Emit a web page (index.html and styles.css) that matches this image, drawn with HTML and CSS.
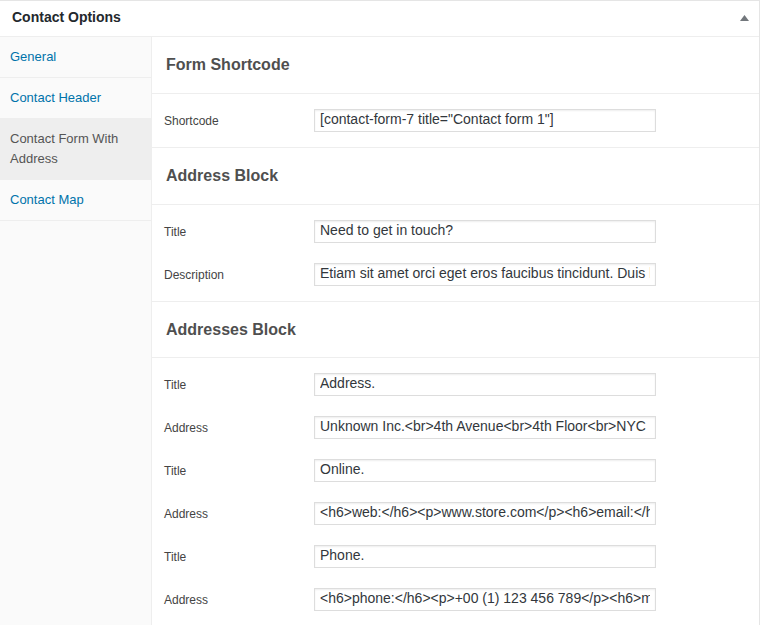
FILE: index.html
```html
<!DOCTYPE html>
<html>
<head>
<meta charset="utf-8">
<link rel="stylesheet" href="styles.css">
</head>
<body>
<div class="postbox">
  <div class="hndle">
    <span class="hndle-title">Contact Options</span>
    <svg class="toggle" width="9" height="6" viewBox="0 0 9 6"><polygon points="4.5,0 9,6 0,6" fill="#72777c"/></svg>
  </div>
  <div class="inside">
    <ul class="tabs">
      <li class="tab"><a>General</a></li>
      <li class="tab"><a>Contact Header</a></li>
      <li class="tab active"><a>Contact Form With Address</a></li>
      <li class="tab"><a>Contact Map</a></li>
    </ul>
    <div class="panel">
      <div class="section-title">Form Shortcode</div>
      <div class="fields">
        <div class="row"><label class="lbl">Shortcode</label><input class="inp" type="text" value='[contact-form-7 title="Contact form 1"]'></div>
      </div>
      <div class="section-title">Address Block</div>
      <div class="fields">
        <div class="row"><label class="lbl">Title</label><input class="inp" type="text" value="Need to get in touch?"></div>
        <div class="row"><label class="lbl">Description</label><input class="inp" type="text" value="Etiam sit amet orci eget eros faucibus tincidunt. Duis leo. Sed fringilla mauris sit amet nibh."></div>
      </div>
      <div class="section-title compact">Addresses Block</div>
      <div class="fields">
        <div class="row"><label class="lbl">Title</label><input class="inp" type="text" value="Address."></div>
        <div class="row"><label class="lbl">Address</label><input class="inp" type="text" value="Unknown Inc.&lt;br&gt;4th Avenue&lt;br&gt;4th Floor&lt;br&gt;NYC"></div>
        <div class="row"><label class="lbl">Title</label><input class="inp" type="text" value="Online."></div>
        <div class="row"><label class="lbl">Address</label><input class="inp" type="text" value="&lt;h6&gt;web:&lt;/h6&gt;&lt;p&gt;www.store.com&lt;/p&gt;&lt;h6&gt;email:&lt;/h6&gt;&lt;p&gt;mail@store.com&lt;/p&gt;"></div>
        <div class="row"><label class="lbl">Title</label><input class="inp" type="text" value="Phone."></div>
        <div class="row"><label class="lbl">Address</label><input class="inp" type="text" value="&lt;h6&gt;phone:&lt;/h6&gt;&lt;p&gt;+00 (1) 123 456 789&lt;/p&gt;&lt;h6&gt;mobile:&lt;/h6&gt;"></div>
      </div>
    </div>
  </div>
</div>
</body>
</html>
```

FILE: styles.css
```css
* { box-sizing: border-box; }
html, body { margin: 0; padding: 0; background: #fff; }
body {
  font-family: "Liberation Sans", Arial, Helvetica, sans-serif;
  color: #444;
  width: 760px;
  height: 625px;
  overflow: hidden;
}
.postbox {
  border-top: 1px solid #e5e5e5;
  border-right: 1px solid #e5e5e5;
  background: #fff;
  min-height: 624px;
  display: flex;
  flex-direction: column;
}
.hndle {
  height: 36px;
  border-bottom: 1px solid #eee;
  display: flex;
  align-items: center;
  justify-content: space-between;
  padding: 0 8px 0 12px;
}
.hndle-title {
  font-size: 14px;
  font-weight: bold;
  color: #23282d;
  position: relative;
  top: -2px;
}
.toggle { margin-right: 2px; position: relative; top: -1px; }
.inside {
  flex: 1;
  display: flex;
}
.tabs {
  list-style: none;
  margin: 0;
  padding: 0;
  width: 152px;
  flex: none;
  background: #fafafa;
  border-right: 1px solid #eee;
}
.tab {
  padding: 10px 10px;
  font-size: 13px;
  line-height: 20px;
  border-bottom: 1px solid #eee;
}
.tab a { color: #0073aa; }
.tab.active { background: #eee; border-bottom-color: #eee; }
.tab.active a { color: #555; }
.panel {
  flex: 1;
  min-width: 0;
}
.section-title {
  height: 57px;
  border-bottom: 1px solid #eee;
  padding: 0 14px 1px;
  display: flex;
  align-items: center;
  font-size: 16px;
  font-weight: bold;
  color: #4f4f4f;
}
.section-title.compact { height: 56px; padding-bottom: 0; }
.fields {
  padding: 15px 0 16px 12px;
  border-bottom: 1px solid #eee;
  display: flex;
  flex-direction: column;
  gap: 21px;
}
.fields:last-child { border-bottom: none; }
.row {
  display: flex;
  align-items: center;
  height: 22px;
}
.lbl {
  width: 150px;
  flex: none;
  font-size: 12px;
  color: #444;
  position: relative;
  top: 1px;
}
.inp {
  width: 342px;
  height: 23px;
  border: 1px solid #ddd;
  box-shadow: inset 0 1px 2px rgba(0,0,0,0.07);
  background: #fff;
  color: #32373c;
  font-family: "Liberation Sans", Arial, Helvetica, sans-serif;
  font-size: 14px;
  padding: 0 5px 2px 5px;
  margin: 0;
  outline: none;
  border-radius: 0;
}
```
